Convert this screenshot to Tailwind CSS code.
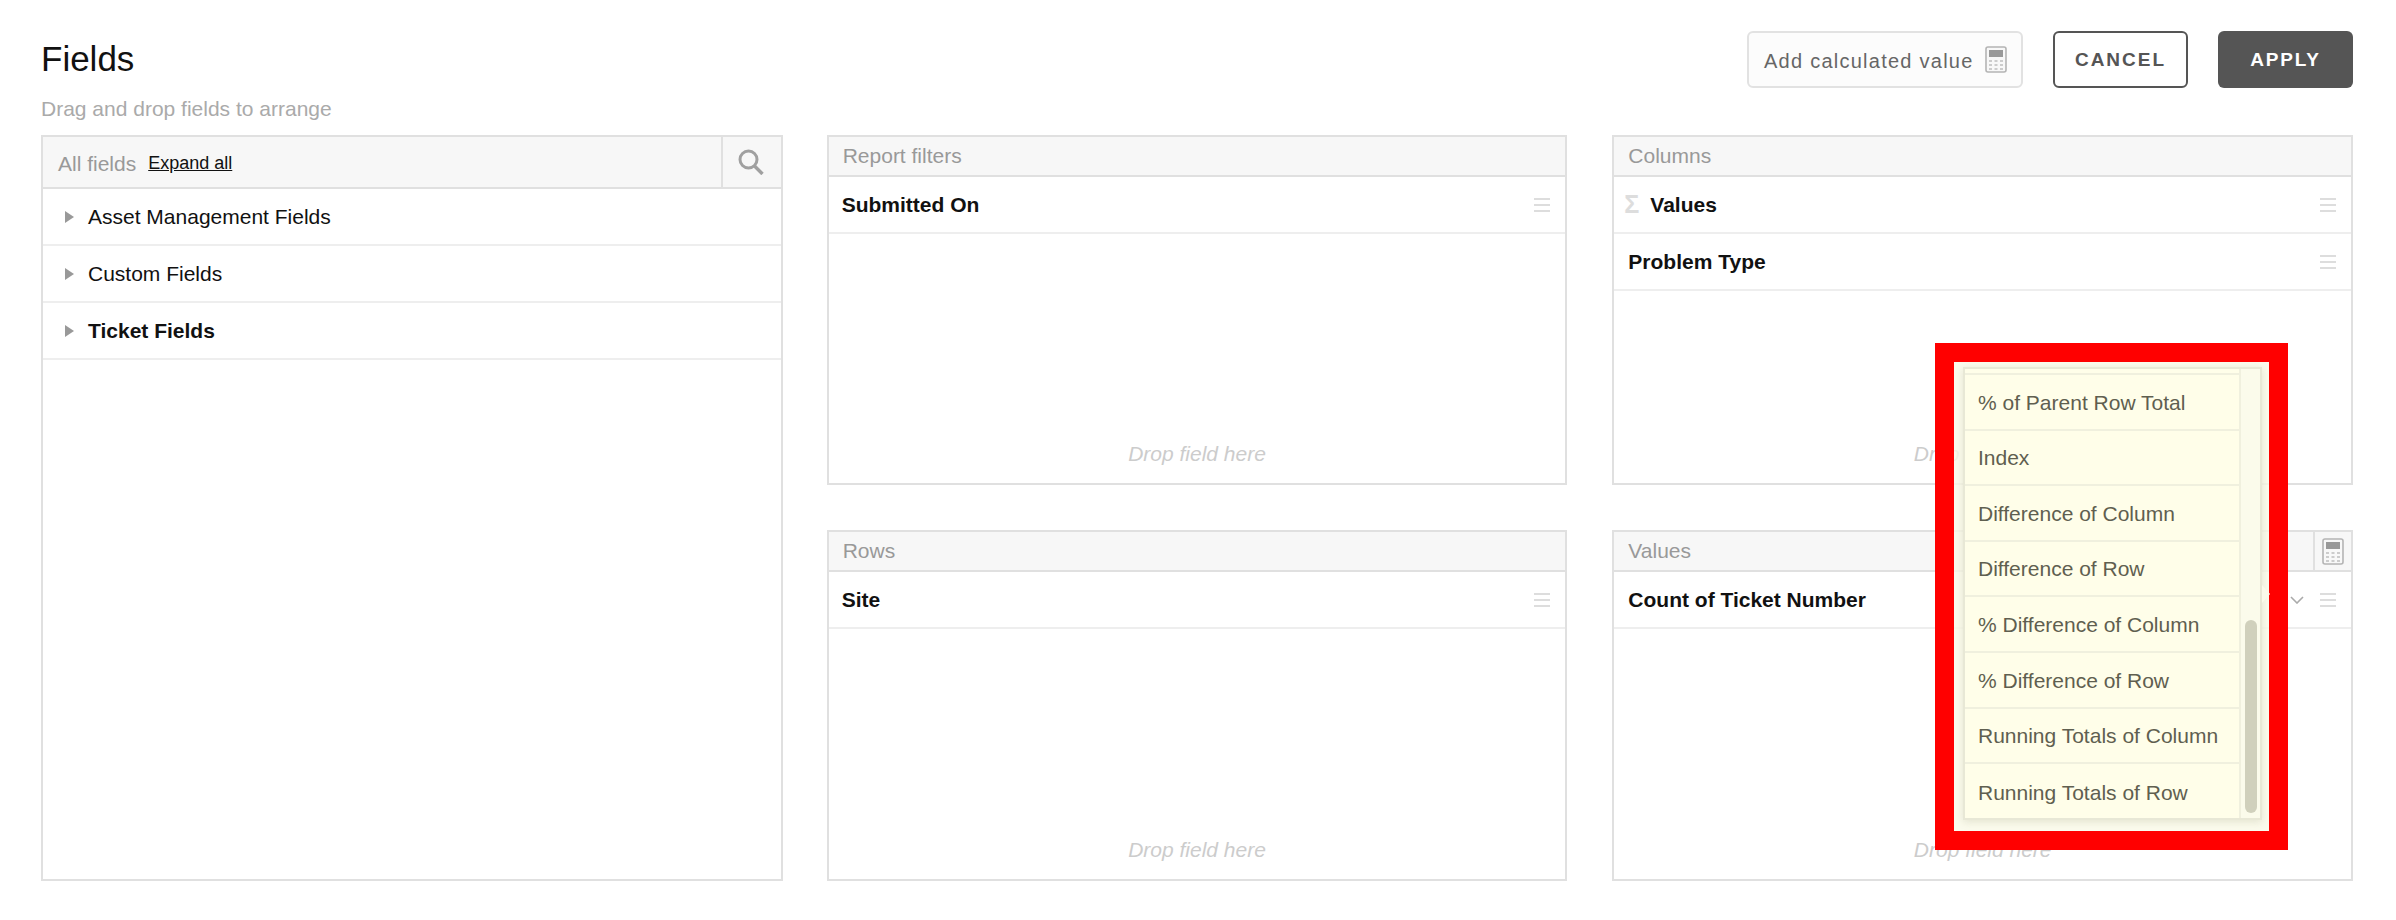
<!DOCTYPE html>
<html lang="en">
<head>
    <meta charset="UTF-8">
    <title>Fields</title>
    <script src="https://cdn.jsdelivr.net/npm/@tailwindcss/browser@4"></script>
</head>
<body class="relative h-[920px] overflow-hidden bg-white font-['Liberation_Sans',Arial,sans-serif] text-[21px] text-[#111]">
    <div class="pl-[41px] pr-[43px]">
        <!-- title and actions -->
        <header class="flex justify-between h-[135px]">
            <div class="pt-[38px]">
                <h1 class="text-[35px] leading-[42px]">Fields</h1>
                <p class="mt-[17px] leading-[24px] text-[#aaa]">Drag and drop fields to arrange</p>
            </div>
            <div class="flex items-start pt-[31px]">
                <button class="flex items-center h-[57px] w-[276px] pl-[15px] rounded-[6px] border-2 border-[#e2e2e2] bg-[#fcfcfc] text-[20px] tracking-[1.25px] text-[#666]">
                    <span class="pt-[2px]">Add calculated value</span>
                    <svg class="ml-[11px]" width="22" height="27" viewBox="0 0 22 27"><rect x="1" y="1" width="20" height="25" rx="2" fill="#f8f8f8" stroke="#b4b4b4" stroke-width="1.6"/><rect x="4" y="4" width="14" height="7" fill="#999"/><g fill="#ccc"><rect x="4" y="14" width="3" height="2"/><rect x="9.5" y="14" width="3" height="2"/><rect x="15" y="14" width="3" height="2"/><rect x="4" y="18" width="3" height="2"/><rect x="9.5" y="18" width="3" height="2"/><rect x="15" y="18" width="3" height="2"/><rect x="4" y="22" width="3" height="2"/><rect x="9.5" y="22" width="3" height="2"/><rect x="15" y="22" width="3" height="2"/></g></svg>
                </button>
                <button class="ml-[30px] h-[57px] w-[135px] rounded-[6px] border-2 border-[#555] bg-white pt-[2px] text-[19px] font-bold tracking-[2px] text-[#555]">CANCEL</button>
                <button class="ml-[30px] h-[57px] w-[135px] rounded-[6px] bg-[#555] pt-[2px] text-[19px] font-bold tracking-[1.8px] text-white">APPLY</button>
            </div>
        </header>

        <div class="flex">
            <!-- all fields -->
            <section class="w-[742px] h-[746px] border-2 border-[#e0e0e0]">
                <div class="flex items-stretch h-[52px] border-b-2 border-[#e0e0e0] bg-[#f7f7f7]">
                    <div class="flex flex-1 items-center pl-[15px] pt-[3px]">
                        <span class="text-[#999]">All fields</span>
                        <a href="#" class="ml-[12px] text-[18px] text-[#111] underline">Expand all</a>
                    </div>
                    <div class="flex w-[60px] items-center justify-center border-l-2 border-[#e0e0e0]">
                        <svg class="mr-[2px]" width="28" height="26" viewBox="0 0 28 26" fill="none" stroke="#a0a0a0"><circle cx="11.5" cy="10.5" r="8.5" stroke-width="3"/><path d="M17.5 17l8 8" stroke-width="3.4"/></svg>
                    </div>
                </div>
                <div class="flex items-center h-[57px] border-b-2 border-[#eee] pl-[22px]">
                    <svg width="9" height="12" viewBox="0 0 9 12"><path d="M0 0l9 6-9 6z" fill="#999"/></svg>
                    <span class="ml-[14px]">Asset Management Fields</span>
                </div>
                <div class="flex items-center h-[57px] border-b-2 border-[#eee] pl-[22px]">
                    <svg width="9" height="12" viewBox="0 0 9 12"><path d="M0 0l9 6-9 6z" fill="#999"/></svg>
                    <span class="ml-[14px]">Custom Fields</span>
                </div>
                <div class="flex items-center h-[57px] border-b-2 border-[#eee] pl-[22px]">
                    <svg width="9" height="12" viewBox="0 0 9 12"><path d="M0 0l9 6-9 6z" fill="#999"/></svg>
                    <span class="ml-[14px] font-bold">Ticket Fields</span>
                </div>
            </section>

            <!-- middle column -->
            <div class="ml-[44px] w-[741px] flex flex-col gap-[45px]">
                <section class="flex flex-col h-[350px] border-2 border-[#e0e0e0]">
                    <div class="flex items-center h-[40px] border-b-2 border-[#e0e0e0] bg-[#f7f7f7] pl-[14px] text-[#999]">Report filters</div>
                    <div class="flex items-center justify-between h-[57px] border-b-2 border-[#eee] pl-[13px] pr-[15px]">
                        <span class="font-bold">Submitted On</span>
                        <svg width="16" height="14" viewBox="0 0 16 14"><path d="M0 1h16M0 7h16M0 13h16" stroke="#ddd" stroke-width="2"/></svg>
                    </div>
                    <div class="flex flex-1 items-end justify-center pb-[17px] italic leading-[24px] text-[#ccc]">Drop field here</div>
                </section>
                <section class="flex flex-col h-[351px] border-2 border-[#e0e0e0]">
                    <div class="flex items-center h-[40px] border-b-2 border-[#e0e0e0] bg-[#f7f7f7] pl-[14px] text-[#999]">Rows</div>
                    <div class="flex items-center justify-between h-[57px] border-b-2 border-[#eee] pl-[13px] pr-[15px]">
                        <span class="font-bold">Site</span>
                        <svg width="16" height="14" viewBox="0 0 16 14"><path d="M0 1h16M0 7h16M0 13h16" stroke="#ddd" stroke-width="2"/></svg>
                    </div>
                    <div class="flex flex-1 items-end justify-center pb-[17px] italic leading-[24px] text-[#ccc]">Drop field here</div>
                </section>
            </div>

            <!-- right column -->
            <div class="ml-[45px] w-[741px] flex flex-col gap-[45px]">
                <section class="flex flex-col h-[350px] border-2 border-[#e0e0e0]">
                    <div class="flex items-center h-[40px] border-b-2 border-[#e0e0e0] bg-[#f7f7f7] pl-[14px] text-[#999]">Columns</div>
                    <div class="flex items-center justify-between h-[57px] border-b-2 border-[#eee] pl-[10px] pr-[15px]">
                        <span class="flex items-center font-bold"><span class="w-[26px] text-[25px] text-[#ddd]">Σ</span>Values</span>
                        <svg width="16" height="14" viewBox="0 0 16 14"><path d="M0 1h16M0 7h16M0 13h16" stroke="#ddd" stroke-width="2"/></svg>
                    </div>
                    <div class="flex items-center justify-between h-[57px] border-b-2 border-[#eee] pl-[14px] pr-[15px]">
                        <span class="font-bold">Problem Type</span>
                        <svg width="16" height="14" viewBox="0 0 16 14"><path d="M0 1h16M0 7h16M0 13h16" stroke="#ddd" stroke-width="2"/></svg>
                    </div>
                    <div class="flex flex-1 items-end justify-center pb-[17px] italic leading-[24px] text-[#ccc]">Drop field here</div>
                </section>
                <section class="flex flex-col h-[351px] border-2 border-[#e0e0e0]">
                    <div class="flex items-stretch justify-between h-[40px] border-b-2 border-[#e0e0e0] bg-[#f7f7f7] pl-[14px] text-[#999]">
                        <span class="self-center">Values</span>
                        <div class="flex w-[38px] items-center justify-center border-l-2 border-[#e0e0e0]">
                            <svg width="22" height="27" viewBox="0 0 22 27"><rect x="1" y="1" width="20" height="25" rx="2" fill="#f8f8f8" stroke="#b4b4b4" stroke-width="1.6"/><rect x="4" y="4" width="14" height="7" fill="#999"/><g fill="#ccc"><rect x="4" y="14" width="3" height="2"/><rect x="9.5" y="14" width="3" height="2"/><rect x="15" y="14" width="3" height="2"/><rect x="4" y="18" width="3" height="2"/><rect x="9.5" y="18" width="3" height="2"/><rect x="15" y="18" width="3" height="2"/><rect x="4" y="22" width="3" height="2"/><rect x="9.5" y="22" width="3" height="2"/><rect x="15" y="22" width="3" height="2"/></g></svg>
                        </div>
                    </div>
                    <div class="flex items-center h-[57px] border-b-2 border-[#eee] pl-[14px] pr-[15px]">
                        <span class="flex-1 font-bold">Count of Ticket Number</span>
                        <svg width="14" height="8" viewBox="0 0 14 8" fill="none"><path d="M1 1l6 6 6-6" stroke="#aaa" stroke-width="1.6"/></svg>
                        <svg class="ml-[16px]" width="16" height="14" viewBox="0 0 16 14"><path d="M0 1h16M0 7h16M0 13h16" stroke="#ddd" stroke-width="2"/></svg>
                    </div>
                    <div class="flex flex-1 items-end justify-center pb-[17px] italic leading-[24px] text-[#ccc]">Drop field here</div>
                </section>
            </div>
        </div>
    </div>

    <!-- tooltip menu, with the red highlight round it -->
    <div class="absolute left-[1935px] top-[343px] w-[353px] h-[507px] border-[19px] border-[#ff0000] bg-[#fafae8]/80 pt-[5px] pl-[9px] pr-[7px]">
        <div class="relative flex h-[453px] border-2 border-[#e8e8d6] bg-[#fffee9] shadow-[0_2px_8px_rgba(120,120,80,0.18)]">
            <ul class="w-[276px] border-r-2 border-[#f0f0de] text-[#5f5f50]">
                <li class="h-[6px] border-b-2 border-[#f0f0de]"></li>
                <li class="flex items-center h-[55.6px] border-b-2 border-[#f0f0de] pl-[13px] pt-[1px]">% of Parent Row Total</li>
                <li class="flex items-center h-[55.6px] border-b-2 border-[#f0f0de] pl-[13px] pt-[1px]">Index</li>
                <li class="flex items-center h-[55.6px] border-b-2 border-[#f0f0de] pl-[13px] pt-[1px]">Difference of Column</li>
                <li class="flex items-center h-[55.6px] border-b-2 border-[#f0f0de] pl-[13px] pt-[1px]">Difference of Row</li>
                <li class="flex items-center h-[55.6px] border-b-2 border-[#f0f0de] pl-[13px] pt-[1px]">% Difference of Column</li>
                <li class="flex items-center h-[55.6px] border-b-2 border-[#f0f0de] pl-[13px] pt-[1px]">% Difference of Row</li>
                <li class="flex items-center h-[55.6px] border-b-2 border-[#f0f0de] pl-[13px] pt-[1px]">Running Totals of Column</li>
                <li class="flex items-center h-[55.6px] pl-[13px] pt-[1px]">Running Totals of Row</li>
            </ul>
            <div class="flex-1 flex flex-col justify-end items-center bg-[#fbfbeb] pb-[5px]">
                <div class="w-[12px] h-[193px] rounded-[6px] bg-[#d0d0bc]"></div>
            </div>
            <svg class="absolute left-[297px] top-[216px]" width="8" height="18" viewBox="0 0 8 18"><path d="M0 0l8 9-8 9z" fill="#fbfbeb"/></svg>
        </div>
    </div>
</body>
</html>
